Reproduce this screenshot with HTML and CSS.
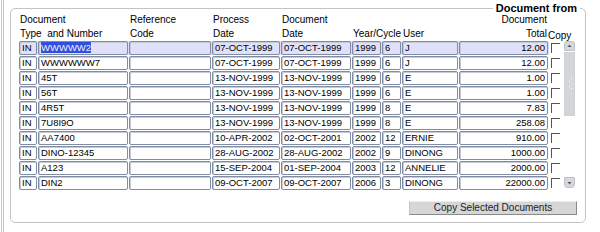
FILE: index.html
```html
<!doctype html>
<html lang="en">
<head>
  <meta charset="UTF-8">
  <title>Document from</title>
  <link rel="stylesheet" href="styles.css">
</head>
<body>
<div class="frame">
  <fieldset class="docs">
    <legend class="docs__title">Document from</legend>

    <div class="cols head">
      <div class="head__cell span2">Document<br>Type&nbsp; and Number</div>
      <div class="head__cell">Reference<br>Code</div>
      <div class="head__cell">Process<br>Date</div>
      <div class="head__cell">Document<br>Date</div>
      <div class="head__cell span2"><br>Year/Cycle</div>
      <div class="head__cell"><br>User</div>
      <div class="head__cell head__cell--num">Document<br>Total</div>
      <div class="head__cell head__cell--copy">Copy</div>
    </div>

    <div class="list">
      <div class="rows">
        <div class="cols row row--selected">
          <div class="fld">IN</div><div class="fld"><span class="sel">WWWWW2</span></div><div class="fld"></div>
          <div class="fld">07-OCT-1999</div><div class="fld">07-OCT-1999</div><div class="fld">1999</div><div class="fld">6</div>
          <div class="fld">J</div><div class="fld fld--num">12.00</div><div class="chk"><span class="chk__box"></span></div>
        </div>
        <div class="cols row">
          <div class="fld">IN</div><div class="fld">WWWWWW7</div><div class="fld"></div>
          <div class="fld">07-OCT-1999</div><div class="fld">07-OCT-1999</div><div class="fld">1999</div><div class="fld">6</div>
          <div class="fld">J</div><div class="fld fld--num">12.00</div><div class="chk"><span class="chk__box"></span></div>
        </div>
        <div class="cols row">
          <div class="fld">IN</div><div class="fld">45T</div><div class="fld"></div>
          <div class="fld">13-NOV-1999</div><div class="fld">13-NOV-1999</div><div class="fld">1999</div><div class="fld">6</div>
          <div class="fld">E</div><div class="fld fld--num">1.00</div><div class="chk"><span class="chk__box"></span></div>
        </div>
        <div class="cols row">
          <div class="fld">IN</div><div class="fld">56T</div><div class="fld"></div>
          <div class="fld">13-NOV-1999</div><div class="fld">13-NOV-1999</div><div class="fld">1999</div><div class="fld">6</div>
          <div class="fld">E</div><div class="fld fld--num">1.00</div><div class="chk"><span class="chk__box"></span></div>
        </div>
        <div class="cols row">
          <div class="fld">IN</div><div class="fld">4R5T</div><div class="fld"></div>
          <div class="fld">13-NOV-1999</div><div class="fld">13-NOV-1999</div><div class="fld">1999</div><div class="fld">8</div>
          <div class="fld">E</div><div class="fld fld--num">7.83</div><div class="chk"><span class="chk__box"></span></div>
        </div>
        <div class="cols row">
          <div class="fld">IN</div><div class="fld">7U8I9O</div><div class="fld"></div>
          <div class="fld">13-NOV-1999</div><div class="fld">13-NOV-1999</div><div class="fld">1999</div><div class="fld">8</div>
          <div class="fld">E</div><div class="fld fld--num">258.08</div><div class="chk"><span class="chk__box"></span></div>
        </div>
        <div class="cols row">
          <div class="fld">IN</div><div class="fld">AA7400</div><div class="fld"></div>
          <div class="fld">10-APR-2002</div><div class="fld">02-OCT-2001</div><div class="fld">2002</div><div class="fld">12</div>
          <div class="fld">ERNIE</div><div class="fld fld--num">910.00</div><div class="chk"><span class="chk__box"></span></div>
        </div>
        <div class="cols row">
          <div class="fld">IN</div><div class="fld">DINO-12345</div><div class="fld"></div>
          <div class="fld">28-AUG-2002</div><div class="fld">28-AUG-2002</div><div class="fld">2002</div><div class="fld">9</div>
          <div class="fld">DINONG</div><div class="fld fld--num">1000.00</div><div class="chk"><span class="chk__box"></span></div>
        </div>
        <div class="cols row">
          <div class="fld">IN</div><div class="fld">A123</div><div class="fld"></div>
          <div class="fld">15-SEP-2004</div><div class="fld">01-SEP-2004</div><div class="fld">2003</div><div class="fld">12</div>
          <div class="fld">ANNELIE</div><div class="fld fld--num">2000.00</div><div class="chk"><span class="chk__box"></span></div>
        </div>
        <div class="cols row">
          <div class="fld">IN</div><div class="fld">DIN2</div><div class="fld"></div>
          <div class="fld">09-OCT-2007</div><div class="fld">09-OCT-2007</div><div class="fld">2006</div><div class="fld">3</div>
          <div class="fld">DINONG</div><div class="fld fld--num">22000.00</div><div class="chk"><span class="chk__box"></span></div>
        </div>
      </div>

      <!-- scrollbar -->
      <div class="scroll">
        <div class="scroll__btn">
          <svg width="9" height="8" viewBox="0 0 9 8"><path d="M2.5 5 L4.5 2.5 L6.5 5 Z" fill="#556"/></svg>
        </div>
        <div class="scroll__thumb">
          <svg width="9" height="14" viewBox="0 0 9 14">
            <rect x="6" y="1" width="1" height="1" fill="#fff"/>
            <rect x="4" y="4" width="1" height="1" fill="#fff"/>
            <rect x="6" y="6" width="1" height="1" fill="#fff"/>
            <rect x="4" y="9" width="1" height="1" fill="#fff"/>
            <rect x="6" y="11" width="1" height="1" fill="#fff"/>
          </svg>
        </div>
        <div class="scroll__track"></div>
        <div class="scroll__btn scroll__btn--down">
          <svg width="9" height="8" viewBox="0 0 9 8"><path d="M2.5 3 L4.5 5.5 L6.5 3 Z" fill="#556"/></svg>
        </div>
      </div>
    </div>

    <div class="actions">
      <button class="btn" type="button">Copy Selected Documents</button>
    </div>
  </fieldset>
</div>
</body>
</html>
```

FILE: styles.css
```css
body {
  margin: 0;
  background: #fff;
  color: #000;
  font: 10px/14px "Liberation Sans", Arial, sans-serif;
}

.frame {
  box-sizing: border-box;
  height: 232px;
  margin-left: 1px;
  padding: 3px 14px 0 6px;
  border-left: 3px double #c6c6c6;
}

/* Fieldset */

.docs {
  margin: 0;
  padding: 0 8px 7px 8px;
  border: 1px solid #c4c4c4;
  border-radius: 5px;
}

.docs__title {
  margin-left: auto;
  margin-right: -3px;
  padding: 0 3px;
  font-size: 11px;
  font-weight: bold;
  line-height: 10px;
}

/* Columns shared by header and rows */

.cols {
  display: grid;
  grid-template-columns: 18px 90px 82px 68px 70px 29px 19px 56px 89px 14px;
  column-gap: 1px;
}

.span2 {
  grid-column: span 2;
}

/* Header */

.head {
  height: 28px;
}

.head__cell {
  padding-left: 1px;
  white-space: nowrap;
}

.head__cell--num {
  padding: 0 1px 0 0;
  text-align: right;
}

.head__cell--copy {
  display: flex;
  align-items: flex-end;
  padding: 0;
  margin: 0 0 -2px -1px;
}

/* Rows */

.list {
  display: flex;
}

.rows {
  display: grid;
  row-gap: 1px;
}

.row {
  height: 14px;
}

.fld {
  box-sizing: border-box;
  height: 14px;
  padding: 0 2px;
  overflow: hidden;
  border: 1px solid #7f8ca4;
  border-radius: 2px;
  box-shadow: inset 1px 1px 0 #c3cad8;
  background: #fff;
  font-size: 9.5px;
  line-height: 12px;
  white-space: nowrap;
}

.fld--num {
  text-align: right;
}

.row--selected {
  background: #dcdcf7;
}

.row--selected .fld {
  background: #e0e0fa;
}

.sel {
  background: #3350dd;
  color: #eef;
}

.chk {
  background: #fff;
}

.chk__box {
  display: block;
  width: 8px;
  height: 9px;
  margin: 2px 0 0 2px;
  border-top: 1px solid #555;
  border-left: 1px solid #555;
}

/* Scrollbar */

.scroll {
  display: flex;
  flex-direction: column;
  width: 11px;
  margin-left: 1px;
}

.scroll__btn {
  box-sizing: border-box;
  height: 10px;
  display: flex;
  align-items: center;
  justify-content: center;
  border: 1px solid #bfc0c4;
  border-radius: 3px 3px 1px 1px;
  background: #d7d8dc;
}

.scroll__btn--down {
  height: 11px;
  margin-bottom: 2px;
  border-radius: 1px 1px 4px 4px;
}

.scroll__thumb {
  box-sizing: border-box;
  height: 64px;
  margin-top: 1px;
  display: flex;
  align-items: center;
  justify-content: center;
  border: 1px solid #cfd0d3;
  background: #d4d5d8;
}

.scroll__track {
  flex: 1;
}

/* Button */

.actions {
  display: flex;
  justify-content: flex-end;
  margin-top: 11px;
}

.btn {
  box-sizing: border-box;
  width: 168px;
  height: 14px;
  padding: 0;
  border: 1px solid;
  border-color: #ececec #8a8a8a #8a8a8a #c4c4c4;
  background: #d6d6d6;
  color: #222;
  font: inherit;
  line-height: 12px;
}
```
